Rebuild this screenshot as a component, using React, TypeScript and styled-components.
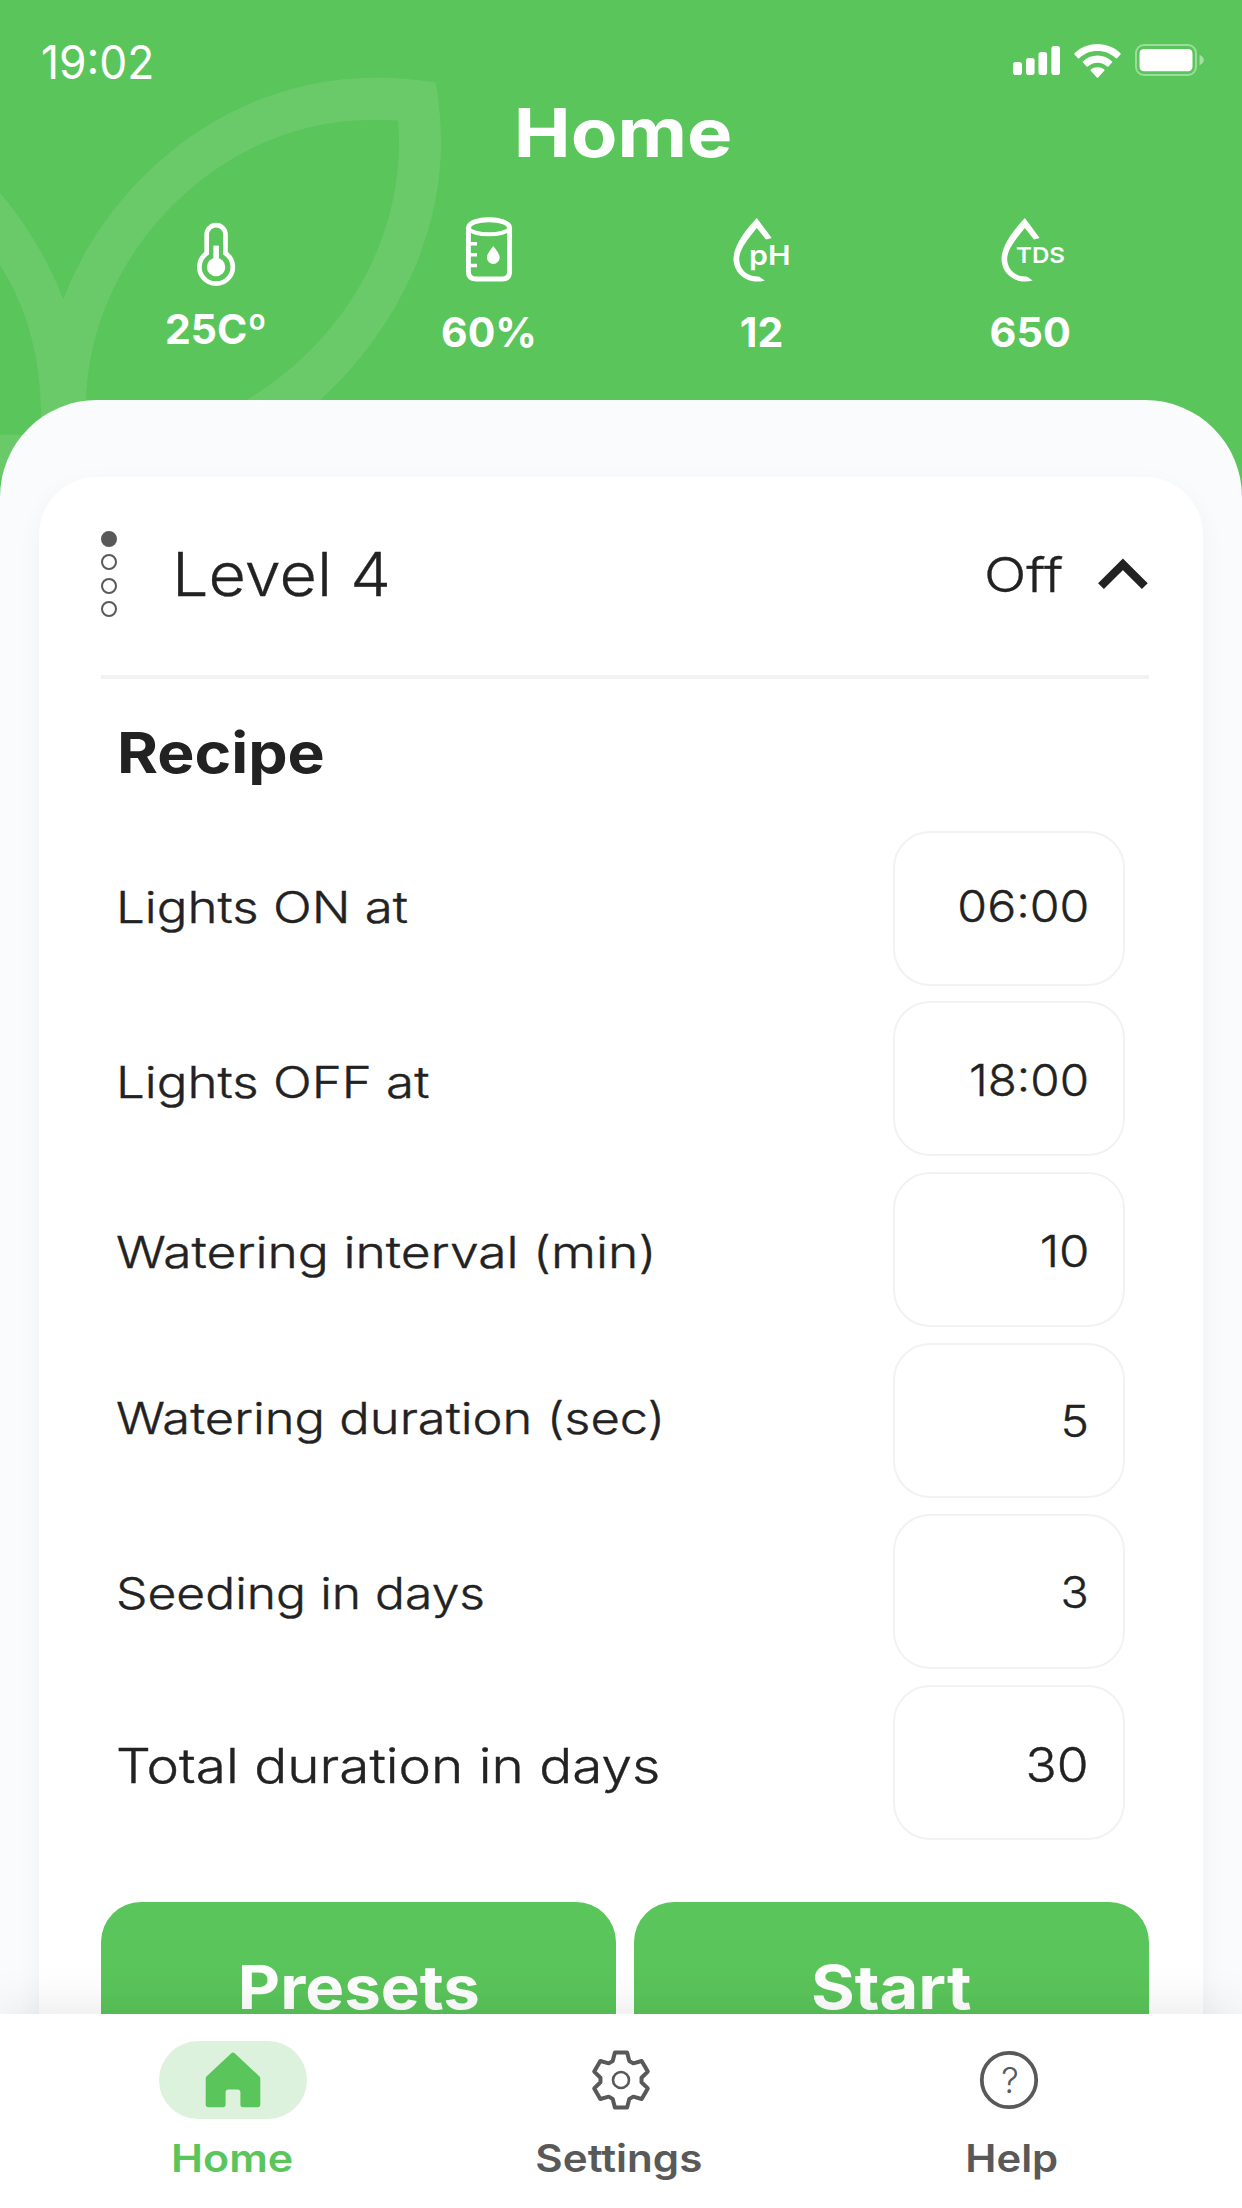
import React from 'react';
import styled, { createGlobalStyle } from 'styled-components';

const GREEN = '#5ac55a';
const INK = '#222222';
const GREY = '#595959';
const LINE = '#f2f2f2';

const GlobalStyle = createGlobalStyle`
  *, *::before, *::after { box-sizing: border-box; }
  body {
    margin: 0;
    background: #ffffff;
    font-family: Inter, "Liberation Sans", sans-serif;
  }
`;

/* Inline run of text set slightly wide, with optional optical nudges. */
const Wide = styled.span<{
  $x?: number;
  $dx?: number;
  $dy?: number;
  $from?: string;
}>`
  display: inline-block;
  white-space: nowrap;
  transform-origin: ${p => p.$from ?? 'center'} center;
  transform: translate(${p => p.$dx ?? 0}px, ${p => p.$dy ?? 0}px)
    scaleX(${p => p.$x ?? 1});
`;

const Screen = styled.div`
  position: relative;
  display: flex;
  flex-direction: column;
  width: 1242px;
  height: 2208px;
  overflow: hidden;
  background: ${GREEN};
`;

const LeafArt = styled.svg`
  position: absolute;
  top: 0;
  left: 0;
`;

const Header = styled.header`
  position: relative;
  height: 400px;
  color: #ffffff;
`;

const StatusBar = styled.div`
  display: flex;
  justify-content: space-between;
  height: 93px;
  padding: 34px 38px 0 41px;
`;

const Clock = styled.div`
  font-size: 46px;
  line-height: 56px;
`;

const StatusIcons = styled.div`
  display: grid;
  grid-template-columns: 47px 47px 69px;
  column-gap: 14px;
  height: 36px;
  margin-top: 9px;
`;

const Title = styled.h1`
  margin: 0;
  padding-left: 4px;
  font-size: 67px;
  font-weight: 700;
  line-height: 80px;
  text-align: center;
`;

const Stats = styled.div`
  display: grid;
  grid-template-columns: repeat(4, 272px);
  margin: 41px 0 0 80px;
`;

const Stat = styled.div`
  display: flex;
  flex-direction: column;
  align-items: center;
`;

const StatValue = styled.div<{ $gap?: number }>`
  margin-top: ${p => p.$gap ?? 18}px;
  font-size: 41px;
  font-weight: 700;
  line-height: 48px;
`;

const IconText = styled.text`
  fill: #ffffff;
  font-family: Inter, sans-serif;
  font-weight: 600;
`;

const Sheet = styled.main`
  position: relative;
  flex: 1;
  min-height: 0;
  overflow: hidden;
  padding: 77px 39px 0;
  border-radius: 97px 97px 0 0;
  background: #fafbfd;
`;

const Card = styled.section`
  height: 1600px;
  padding: 0 54px 0 62px;
  border-radius: 58px 58px 0 0;
  background: #ffffff;
  box-shadow: 0 8px 26px rgba(0, 0, 0, 0.045);
`;

const CardHeader = styled.div`
  display: flex;
  align-items: center;
  height: 202px;
  padding-bottom: 4px;
  border-bottom: 4px solid ${LINE};
  color: ${INK};
  font-weight: 300;
  -webkit-text-stroke: 0.3px ${INK};
`;

const Dots = styled.div`
  display: flex;
  flex-direction: column;
  gap: 7.3px;
`;

const Dot = styled.span<{ $on?: boolean }>`
  width: 16px;
  height: 16px;
  border: 2px solid ${GREY};
  border-radius: 50%;
  background: ${p => (p.$on ? GREY : 'transparent')};
`;

const LevelName = styled.div`
  flex: 1;
  margin-left: 55px;
  font-size: 60px;
`;

const LevelState = styled.div`
  margin-right: 35px;
  font-size: 48px;
`;

const SectionTitle = styled.h2`
  margin: 39.6px 0 44px;
  padding-left: 16px;
  color: ${INK};
  font-size: 56px;
  font-weight: 700;
  line-height: 68px;
`;

const Rows = styled.div`
  display: flex;
  flex-direction: column;
  gap: 15.8px;
  padding: 0 24px 0 15px;
`;

const Row = styled.label<{ $size?: number }>`
  display: flex;
  align-items: center;
  justify-content: space-between;
  height: 155px;
  color: ${INK};
  font-size: ${p => p.$size ?? 44}px;
  font-weight: 300;
  -webkit-text-stroke: 0.4px ${INK};
`;

const Field = styled.div`
  display: flex;
  align-items: center;
  justify-content: flex-end;
  width: 232px;
  height: 100%;
  padding-right: 34px;
  border: 2px solid ${LINE};
  border-radius: 37px;
`;

const Actions = styled.div`
  display: grid;
  grid-template-columns: 1fr 1fr;
  gap: 18px;
  margin-top: 62.4px;
`;

const Action = styled.button`
  height: 170px;
  padding: 0;
  border: 0;
  border-radius: 40px;
  background: ${GREEN};
  color: #ffffff;
  font-family: inherit;
  font-size: 60px;
  font-weight: 700;
`;

const TabBar = styled.nav`
  position: relative;
  display: grid;
  grid-template-columns: repeat(3, 388px);
  justify-content: center;
  height: 194px;
  padding-top: 27px;
  background: #ffffff;
  box-shadow: 0 0 50px rgba(0, 0, 0, 0.11);
`;

const Tab = styled.div<{ $active?: boolean }>`
  display: flex;
  flex-direction: column;
  align-items: center;
  color: ${p => (p.$active ? GREEN : GREY)};
`;

const TabIcon = styled.div<{ $active?: boolean }>`
  display: flex;
  align-items: center;
  justify-content: center;
  width: 148px;
  height: 77.5px;
  border-radius: 39px;
  background: ${p => (p.$active ? '#ddf2dd' : 'transparent')};
`;

const TabLabel = styled.div`
  margin-top: 16.2px;
  font-size: 38px;
  font-weight: 600;
  line-height: 46px;
`;

const Leaf = () => (
  <LeafArt width="460" height="500" viewBox="0 0 460 500" fill="#ffffff" fillOpacity="0.1">
    <path d="M0 193C28 226 48 261 63.3 299.5C106 186 222 77.7 376 77.7C398 77.7 416 79.5 435.8 82.4C439 102 441 122 441 143C441 240 392 335 319 401H245C340 345 399 246 399 143C399 135 398.700 128 398 120.500C389 120 380 120 370 120C222 120 90 250 86 401V440H41V415C41 358 27 307 0 265Z" />
    <rect y="434.700" width="41" height="43" />
  </LeafArt>
);

const Signal = () => (
  <svg width="47" height="36" viewBox="0 0 47 36" fill="#ffffff">
    <rect x="0" y="19" width="9" height="13" rx="2.800" />
    <rect x="13" y="15" width="8.600" height="17" rx="2.800" />
    <rect x="25.500" y="9" width="8.600" height="23" rx="2.800" />
    <rect x="38.400" y="3" width="8.600" height="29" rx="2.800" />
  </svg>
);

const Wifi = () => (
  <svg width="47" height="36" viewBox="0 0 47 36" fill="#ffffff">
    <path d="M23.500 1C14.500 1 6.500 4.500.5 10.200Q0 10.800.5 11.500L4 15.200Q4.600 15.700 5.200 15.200C10 10.600 16.300 8 23.500 8S37 10.600 41.800 15.200Q42.400 15.700 43 15.200L46.500 11.500Q47 10.800 46.500 10.200C40.500 4.500 32.500 1 23.500 1Z" />
    <path d="M23.500 12.500C17.800 12.500 12.700 14.700 8.900 18.400Q8.400 19 8.900 19.600L12.600 23.500Q13.200 24 13.800 23.500C16.400 21.200 19.800 19.700 23.500 19.700S30.600 21.200 33.200 23.500Q33.800 24 34.400 23.500L38.100 19.600Q38.600 19 38.100 18.400C34.300 14.700 29.200 12.500 23.500 12.500Z" />
    <path d="M23.500 24.300C20.900 24.300 18.500 25.100 16.700 26.600Q16.200 27.100 16.700 27.700L22.900 34.500Q23.500 35 24.100 34.500L30.300 27.700Q30.800 27.100 30.300 26.600C28.500 25.100 26.100 24.300 23.500 24.300Z" />
  </svg>
);

const Battery = () => (
  <svg width="69" height="36" viewBox="0 0 69 36">
    <rect x="1" y="2" width="60" height="30" rx="8" fill="none" stroke="#ffffff" strokeOpacity="0.4" strokeWidth="2" />
    <rect x="4.500" y="6" width="53" height="22.300" rx="4.500" fill="#ffffff" />
    <path d="M64.500 11.800C67 13 68.800 14.500 68.800 17S67 21 64.500 22.200Z" fill="#ffffff" fillOpacity="0.45" />
  </svg>
);

const Thermometer = () => (
  <svg width="96" height="76" viewBox="0 0 96 76">
    <path d="M38.700 39.200V20.600A9.400 9.400 0 0 1 57.500 20.600V39.200A16.700 16.700 0 1 1 38.700 39.200Z" fill="none" stroke="#ffffff" strokeWidth="4.700" />
    <rect x="45.400" y="31.600" width="5.500" height="16" fill="#ffffff" />
    <circle cx="48.100" cy="53" r="9.200" fill="#ffffff" />
  </svg>
);

const Beaker = () => (
  <svg width="96" height="76" viewBox="0 0 96 76" fill="none" stroke="#ffffff" strokeWidth="4.900">
    <path d="M28.400 14V57.500Q28.400 65 35.900 65H62.100Q69.600 65 69.600 57.500V14" />
    <path d="M28.400 14C29 2.500 69 2.500 69.600 14C66 22.400 32 22.400 28.400 14Z" strokeWidth="4" />
    <path d="M28.400 14C29 3 69 3 69.600 14" />
    <path d="M30 29.800H37M30 40.700H37M30 51.500H37" strokeWidth="3.600" />
    <path d="M55.300 32C58 36 61.700 40 61.700 43.500A6.400 6.400 0 0 1 48.900 43.500C48.900 40 52.600 36 55.300 32Z" transform="translate(-2 0)" fill="#ffffff" stroke="none" />
  </svg>
);

const DropWithLabel = ({ shift = 0, children }: { shift?: number; children: React.ReactNode }) => (
  <svg width="96" height="76" viewBox="0 0 96 76">
    <path
      transform={`translate(${shift} 0)`}
      d="M44.800 4L59.700 24L54 25.500L44.800 14C35 26 27.200 36 27.200 45C27.200 55 35 62.400 45 62.400H46.800L52.700 66.500Q49.500 67.600 45 67.600C31.500 67.600 21.500 57 21.500 45C21.500 32 33 16.500 44.800 4Z"
      fill="#ffffff"
    />
    {children}
  </svg>
);

const ChevronUp = () => (
  <svg width="51" height="32" viewBox="0 0 51 32" fill="none" stroke={INK} strokeWidth="8.200">
    <path d="M3 28.200L24.900 6.300L46.800 28.200" />
  </svg>
);

const HouseIcon = () => (
  <svg width="56" height="58" viewBox="0 0 56 58" fill={GREEN}>
    <path d="M26.300 2.200Q28 .6 29.700 2.200L54.300 25.300Q55.300 26.300 55.300 27.600V53.500Q55.300 56.200 52.600 56.200H38Q35.400 56.200 35.400 53.500V41.300Q35.400 38.400 32.500 38.400H23.500Q20.600 38.400 20.600 41.300V53.500Q20.600 56.200 18 56.200H3.400Q.7 56.200.7 53.500V27.600Q.7 26.300 1.700 25.300Z" />
  </svg>
);

const TOOTH: [number, number][] = [
  [-8.3, -18.9],
  [-6.1, -27.4],
  [6.1, -27.4],
  [8.3, -18.9],
];

const gearPath = () => {
  const points: string[] = [];
  for (let i = 0; i < 6; i++) {
    const a = (i * Math.PI) / 3;
    for (const [x, y] of TOOTH) {
      const px = x * Math.cos(a) - y * Math.sin(a);
      const py = x * Math.sin(a) + y * Math.cos(a);
      points.push(`${px.toFixed(2)} ${py.toFixed(2)}`);
    }
  }
  return `M${points.join('L')}Z`;
};

const GearIcon = () => (
  <svg width="60" height="60" viewBox="-30 -30 60 60" fill="none" stroke={GREY} strokeLinejoin="round">
    <path d={gearPath()} strokeWidth="4" />
    <circle r="8" strokeWidth="2.600" />
  </svg>
);

const HelpIcon = () => (
  <svg width="60" height="60" viewBox="-30 -30 60 60">
    <circle r="27.200" fill="none" stroke={GREY} strokeWidth="3.800" />
    <text x="1" y="12.800" textAnchor="middle" fill={GREY} fontFamily="Inter, sans-serif" fontSize="35" fontWeight="300">
      ?
    </text>
  </svg>
);

type Setting = {
  label: string;
  value: string;
  size?: number;
  labelX: number;
  valueX: number;
  labelDy: number;
  valueDy: number;
};

const settings: Setting[] = [
  { label: 'Lights ON at', value: '06:00', labelX: 1.16, valueX: 1.097, labelDy: -1.2, valueDy: -2.2 },
  { label: 'Lights OFF at', value: '18:00', labelX: 1.16, valueX: 1.08, labelDy: 3, valueDy: 1.2 },
  { label: 'Watering interval (min)', value: '10', labelX: 1.172, valueX: 1.12, labelDy: 2.2, valueDy: 1.2 },
  { label: 'Watering duration (sec)', value: '5', labelX: 1.151, valueX: 1.091, labelDy: -2, valueDy: 1.2 },
  { label: 'Seeding in days', value: '3', labelX: 1.132, valueX: 1.06, labelDy: 2.4, valueDy: 1.2 },
  { label: 'Total duration in days', value: '30', size: 48, labelX: 1.143, valueX: 1.075, labelDy: 2.5, valueDy: 2.3 },
];

export default function App() {
  return (
    <>
      <GlobalStyle />
      <Screen>
        <Leaf />
        <Header>
          <StatusBar>
            <Clock>
              <Wide $x={0.965} $from="left">19:02</Wide>
            </Clock>
            <StatusIcons>
              <Signal />
              <Wifi />
              <Battery />
            </StatusIcons>
          </StatusBar>
          <Title>
            <Wide $x={1.138}>Home</Wide>
          </Title>
          <Stats>
            <Stat>
              <Thermometer />
              <StatValue $gap={15}>25Cº</StatValue>
            </Stat>
            <Stat>
              <Beaker />
              <StatValue>
                <Wide $dx={1}>60%</Wide>
              </StatValue>
            </Stat>
            <Stat>
              <DropWithLabel>
                <IconText x="37" y="50.500" fontSize="27" textLength="41.500" lengthAdjust="spacingAndGlyphs">pH</IconText>
              </DropWithLabel>
              <StatValue>
                <Wide $dx={1.5}>12</Wide>
              </StatValue>
            </Stat>
            <Stat>
              <DropWithLabel shift={-4}>
                <IconText x="32" y="48.500" fontSize="22" textLength="49" lengthAdjust="spacingAndGlyphs">TDS</IconText>
              </DropWithLabel>
              <StatValue>
                <Wide $x={1.01} $dx={-2}>650</Wide>
              </StatValue>
            </Stat>
          </Stats>
        </Header>

        <Sheet>
          <Card>
            <CardHeader>
              <Dots>
                <Dot $on />
                <Dot />
                <Dot />
                <Dot />
              </Dots>
              <LevelName>
                <Wide $x={1.078} $from="left">Level 4</Wide>
              </LevelName>
              <LevelState>
                <Wide $x={1.162} $from="right">Off</Wide>
              </LevelState>
              <ChevronUp />
            </CardHeader>

            <SectionTitle>
              <Wide $x={1.116} $from="left">Recipe</Wide>
            </SectionTitle>

            <Rows>
              {settings.map(s => (
                <Row key={s.label} $size={s.size}>
                  <Wide $x={s.labelX} $dy={s.labelDy} $from="left">{s.label}</Wide>
                  <Field>
                    <Wide $x={s.valueX} $dy={s.valueDy} $from="right">{s.value}</Wide>
                  </Field>
                </Row>
              ))}
            </Rows>

            <Actions>
              <Action>
                <Wide $x={1.09} $dx={0.8}>Presets</Wide>
              </Action>
              <Action>
                <Wide $x={1.114} $dx={-0.8}>Start</Wide>
              </Action>
            </Actions>
          </Card>
        </Sheet>

        <TabBar>
          <Tab $active>
            <TabIcon $active>
              <HouseIcon />
            </TabIcon>
            <TabLabel>
              <Wide $x={1.13} $dx={-1}>Home</Wide>
            </TabLabel>
          </Tab>
          <Tab>
            <TabIcon>
              <GearIcon />
            </TabIcon>
            <TabLabel>
              <Wide $x={1.108} $dx={-2.5}>Settings</Wide>
            </TabLabel>
          </Tab>
          <Tab>
            <TabIcon>
              <HelpIcon />
            </TabIcon>
            <TabLabel>
              <Wide $x={1.1} $dx={2.5}>Help</Wide>
            </TabLabel>
          </Tab>
        </TabBar>
      </Screen>
    </>
  );
}
